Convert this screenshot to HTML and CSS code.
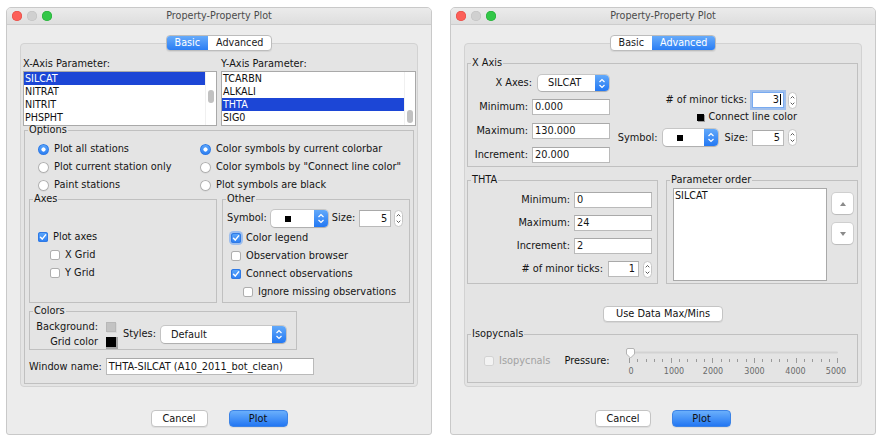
FILE: index.html
```html
<!DOCTYPE html>
<html>
<head>
<meta charset="utf-8">
<title>Property-Property Plot</title>
<link rel="stylesheet" href="styles.css">
</head>
<body>
<div class="desk">

<section class="win">
  <header class="titlebar">
    <span class="lights"><i class="light red"></i><i class="light off"></i><i class="light green"></i></span>
    <span class="title">Property-Property Plot</span>
    <span></span>
  </header>
  <div class="wbody">
    <div class="tabs"><span class="tab on">Basic</span><span class="tab">Advanced</span></div>
    <div class="panel basic">
      <div class="params">
        <div>
          <div class="plabel">X-Axis Parameter:</div>
          <div class="list">
            <div class="rows"><div class="row sel">SILCAT</div><div class="row">NITRAT</div><div class="row">NITRIT</div><div class="row">PHSPHT</div></div>
            <div class="vscroll"><span class="thumb t1"></span></div>
          </div>
        </div>
        <div>
          <div class="plabel">Y-Axis Parameter:</div>
          <div class="list">
            <div class="rows"><div class="row">TCARBN</div><div class="row">ALKALI</div><div class="row sel">THTA</div><div class="row">SIG0</div></div>
            <div class="vscroll"><span class="thumb t2"></span></div>
          </div>
        </div>
      </div>

      <fieldset class="grp opts">
        <legend>Options</legend>
        <div class="radios">
          <div class="opt"><i class="radio on"></i>Plot all stations</div>
          <div class="opt"><i class="radio on"></i>Color symbols by current colorbar</div>
          <div class="opt"><i class="radio"></i>Plot current station only</div>
          <div class="opt"><i class="radio"></i>Color symbols by "Connect line color"</div>
          <div class="opt"><i class="radio"></i>Paint stations</div>
          <div class="opt"><i class="radio"></i>Plot symbols are black</div>
        </div>
        <div class="subrow">
          <fieldset class="grp axes">
            <legend>Axes</legend>
            <div class="axes-body">
              <div class="chk"><i class="cb on"><svg viewBox="0 0 10 10" width="10" height="10"><path d="M2.5 5.3 4.2 7.1 7.6 2.9" fill="none" stroke="#fff" stroke-width="1.5" stroke-linecap="round" stroke-linejoin="round"/></svg></i>Plot axes</div>
              <div class="chk ind"><i class="cb"></i>X Grid</div>
              <div class="chk ind"><i class="cb"></i>Y Grid</div>
            </div>
          </fieldset>
          <fieldset class="grp other">
            <legend>Other</legend>
            <div class="other-body">
              <div class="symrow">
                <span>Symbol:</span>
                <span class="popup w-sym ml4"><span class="pv"><i class="sq"></i></span><span class="pa"><svg width="8" height="11" viewBox="0 0 8 11"><path d="M1.5 4 4 1.5 6.5 4M1.5 7 4 9.5 6.5 7" fill="none" stroke="#fff" stroke-width="1.2"/></svg></span></span>
                <span class="ml4">Size:</span>
                <span class="field num w-size ml4 tall">5</span>
                <svg class="spin ml3" width="9" height="17" viewBox="0 0 9 17"><rect x=".5" y=".5" width="8" height="16" rx="4" fill="#fff" stroke="#c6c6c6"/><path d="M2.7 6.3 4.5 4.5 6.3 6.3M2.7 10.7 4.5 12.5 6.3 10.7" fill="none" stroke="#4a4a4a" stroke-width=".9"/></svg>
              </div>
              <div class="chk"><i class="cb on focus"><svg viewBox="0 0 10 10" width="10" height="10"><path d="M2.5 5.3 4.2 7.1 7.6 2.9" fill="none" stroke="#fff" stroke-width="1.5" stroke-linecap="round" stroke-linejoin="round"/></svg></i>Color legend</div>
              <div class="chk"><i class="cb"></i>Observation browser</div>
              <div class="chk"><i class="cb on"><svg viewBox="0 0 10 10" width="10" height="10"><path d="M2.5 5.3 4.2 7.1 7.6 2.9" fill="none" stroke="#fff" stroke-width="1.5" stroke-linecap="round" stroke-linejoin="round"/></svg></i>Connect observations</div>
              <div class="chk ind"><i class="cb"></i>Ignore missing observations</div>
            </div>
          </fieldset>
        </div>
        <fieldset class="grp colors">
          <legend>Colors</legend>
          <div class="colors-body">
            <span class="clabel">Background:</span><i class="swatch gray"></i>
            <span class="slabel">Styles:</span>
            <span class="popup w-styles"><span class="pv">Default</span><span class="pa"><svg width="8" height="11" viewBox="0 0 8 11"><path d="M1.5 4 4 1.5 6.5 4M1.5 7 4 9.5 6.5 7" fill="none" stroke="#fff" stroke-width="1.2"/></svg></span></span>
            <span class="clabel">Grid color</span><i class="swatch black"></i>
          </div>
        </fieldset>
        <div class="wname"><span>Window name:</span><span class="field w-wname">THTA-SILCAT (A10_2011_bot_clean)</span></div>
      </fieldset>
    </div>
    <div class="actions"><button class="btn w-cancel">Cancel</button><button class="btn primary w-plot">Plot</button></div>
  </div>
</section>

<section class="win">
  <header class="titlebar">
    <span class="lights"><i class="light red"></i><i class="light off"></i><i class="light green"></i></span>
    <span class="title">Property-Property Plot</span>
    <span></span>
  </header>
  <div class="wbody">
    <div class="tabs"><span class="tab">Basic</span><span class="tab on">Advanced</span></div>
    <div class="panel adv">
      <fieldset class="grp xaxis">
        <legend>X Axis</legend>
        <div class="xbody">
          <div class="xform">
            <span class="lbl xl">X Axes:</span>
            <span class="popup w-xaxes"><span class="pv">SILCAT</span><span class="pa"><svg width="8" height="11" viewBox="0 0 8 11"><path d="M1.5 4 4 1.5 6.5 4M1.5 7 4 9.5 6.5 7" fill="none" stroke="#fff" stroke-width="1.2"/></svg></span></span>
            <span class="lbl">Minimum:</span><span class="field">0.000</span>
            <span class="lbl">Maximum:</span><span class="field">130.000</span>
            <span class="lbl">Increment:</span><span class="field">20.000</span>
          </div>
          <div class="xright">
            <div class="xr1">
              <span># of minor ticks:</span>
              <span class="field num focus w-size ml5">3<span class="caret"></span></span>
              <svg class="spin ml4" width="9" height="17" viewBox="0 0 9 17"><rect x=".5" y=".5" width="8" height="16" rx="4" fill="#fff" stroke="#c6c6c6"/><path d="M2.7 6.3 4.5 4.5 6.3 6.3M2.7 10.7 4.5 12.5 6.3 10.7" fill="none" stroke="#4a4a4a" stroke-width=".9"/></svg>
            </div>
            <div class="xr2"><i class="blk"></i>Connect line color</div>
            <div class="xr3">
              <span>Symbol:</span>
              <span class="popup w-sym2 ml5"><span class="pv"><i class="sq sq2"></i></span><span class="pa"><svg width="8" height="11" viewBox="0 0 8 11"><path d="M1.5 4 4 1.5 6.5 4M1.5 7 4 9.5 6.5 7" fill="none" stroke="#fff" stroke-width="1.2"/></svg></span></span>
              <span class="ml7">Size:</span>
              <span class="field num w-size ml4">5</span>
              <svg class="spin ml4" width="9" height="17" viewBox="0 0 9 17"><rect x=".5" y=".5" width="8" height="16" rx="4" fill="#fff" stroke="#c6c6c6"/><path d="M2.7 6.3 4.5 4.5 6.3 6.3M2.7 10.7 4.5 12.5 6.3 10.7" fill="none" stroke="#4a4a4a" stroke-width=".9"/></svg>
            </div>
          </div>
        </div>
      </fieldset>

      <div class="row2">
        <fieldset class="grp thta">
          <legend>THTA</legend>
          <div class="tform">
            <span class="lbl">Minimum:</span><span class="field">0</span>
            <span class="lbl">Maximum:</span><span class="field">24</span>
            <span class="lbl">Increment:</span><span class="field">2</span>
            <div class="tticks">
              <span class="lbl"># of minor ticks:</span>
              <span class="field num w-ticks ml5">1</span>
              <svg class="spin ml4" width="9" height="17" viewBox="0 0 9 17"><rect x=".5" y=".5" width="8" height="16" rx="4" fill="#fff" stroke="#c6c6c6"/><path d="M2.7 6.3 4.5 4.5 6.3 6.3M2.7 10.7 4.5 12.5 6.3 10.7" fill="none" stroke="#4a4a4a" stroke-width=".9"/></svg>
            </div>
          </div>
        </fieldset>
        <fieldset class="grp porder">
          <legend>Parameter order</legend>
          <div class="pobody">
            <div class="plist"><div class="prow">SILCAT</div></div>
            <div class="arrows">
              <span class="abtn up"><i class="tri tup"></i></span>
              <span class="abtn down"><i class="tri tdown"></i></span>
            </div>
          </div>
        </fieldset>
      </div>

      <button class="btn datab">Use Data Max/Mins</button>

      <fieldset class="grp iso">
        <legend>Isopycnals</legend>
        <div class="isobody">
          <div class="chk dis"><i class="cb cbdis"></i>Isopycnals</div>
          <span class="press">Pressure:</span>
          <svg class="slider" width="232" height="32" viewBox="0 0 232 32">
            <line x1="8" y1="6.5" x2="215" y2="6.5" stroke="#d2d2d2" stroke-width="2" stroke-linecap="round"/>
            <path d="M7.5 12v5M15.5 13v3M24.5 13v3M32.5 13v3M40.5 13v3M49.5 12v5M57.5 13v3M65.5 13v3M74.5 13v3M82.5 13v3M90.5 12v5M99.5 13v3M107.5 13v3M115.5 13v3M124.5 13v3M132.5 12v5M140.5 13v3M149.5 13v3M157.5 13v3M165.5 13v3M174.5 12v5M182.5 13v3M190.5 13v3M199.5 13v3M207.5 13v3M215.5 12v5" stroke="#9a9a9a" stroke-width="1" fill="none"/>
            <path d="M6 2.5H11Q12.5 2.5 12.5 4V8L8.5 12 4.5 8V4Q4.5 2.5 6 2.5Z" fill="#fff" stroke="#b3b3b3"/>
            <g font-family="DejaVu Sans, sans-serif" font-size="8" fill="#6a6a6a" text-anchor="middle">
              <text x="9" y="28">0</text>
              <text x="52" y="28">1000</text>
              <text x="91" y="28">2000</text>
              <text x="132.5" y="28">3000</text>
              <text x="173.5" y="28">4000</text>
              <text x="214" y="28">5000</text>
            </g>
          </svg>
        </div>
      </fieldset>
    </div>
    <div class="actions"><button class="btn w-cancel2">Cancel</button><button class="btn primary w-plot">Plot</button></div>
  </div>
</section>

</div>
</body>
</html>
```

FILE: styles.css
```css
* { box-sizing: border-box; }
html, body { margin: 0; padding: 0; background: #fff; }
body {
  font-family: "DejaVu Sans", "Liberation Sans", sans-serif;
  font-size: 9.8px;
  line-height: 12px;
  color: #151515;
}
i { display: block; font-style: normal; }

.desk { display: flex; gap: 18px; padding: 7px 0 0 6px; }

.win {
  width: 426px; height: 428px; flex: none;
  display: flex; flex-direction: column;
  background: #ececec;
  border: 1px solid #c9c9c9;
  border-radius: 5px 5px 3px 3px;
}
.titlebar {
  flex: none; height: 17px;
  display: grid; grid-template-columns: 1fr auto 1fr; align-items: center;
  background: linear-gradient(#ebebeb, #dedede);
  border-bottom: 1px solid #cdcdcd;
  border-radius: 4px 4px 0 0;
}
.lights { display: flex; gap: 5px; padding-left: 5px; }
.light { width: 10px; height: 10px; border-radius: 50%; }
.red { background: #fc5f58; box-shadow: inset 0 0 0 .5px #df463f; }
.off { background: #d0d0d0; box-shadow: inset 0 0 0 .5px #bfbfbf; }
.green { background: #33c748; box-shadow: inset 0 0 0 .5px #21a833; }
.title { color: #4b4b4b; line-height: 16px; font-size: 9.6px; }

.wbody { flex: 1; display: flex; flex-direction: column; align-items: center; padding: 10px 13px 0; }

.tabs {
  display: flex; height: 16px; position: relative; z-index: 1; margin-bottom: -8px;
  background: #fff; border: 1px solid #bcbcbc; border-radius: 4px; overflow: hidden;
  box-shadow: 0 1px 1px rgba(0,0,0,.07);
}
.tab { padding: 0 8px; line-height: 14px; color: #1a1a1a; font-size: 9.6px; }
.tab.on { background: linear-gradient(#67abfa, #2a7df4); color: #fff; }

.panel {
  align-self: stretch; height: 344px;
  background: #e4e4e4; border: 1px solid #d2d2d2; border-radius: 4px;
}

.actions { display: flex; gap: 21px; margin-top: 23px; }
.btn {
  font: inherit; height: 17px; line-height: 15px; padding: 0; color: #111;
  background: #fff; border: 1px solid #c4c4c4; border-radius: 4px;
  box-shadow: 0 1px 0 rgba(0,0,0,.06);
}
.w-cancel { width: 57px; }
.w-cancel2 { width: 56px; }
.w-plot { width: 59px; }
.primary { background: linear-gradient(#6aaffb, #2377f3); border-color: #3c83e6; }

/* group boxes */
.grp { margin: 0; padding: 0; border: 1px solid #c0c0c0; min-inline-size: 0; flex: none; }
.grp > legend { padding: 0 1px; margin-left: 3px; line-height: 12px; }

/* basic: parameter lists */
.params { display: grid; grid-template-columns: 194px 195px; column-gap: 4px; padding: 14px 0 0 2px; }
.plabel { line-height: 12px; margin-bottom: 1px; }
.list { height: 55px; display: flex; overflow: hidden; background: #fff; border: 1px solid #a9a9a9; }
.rows { flex: 1; }
.row { line-height: 13px; padding-left: 1px; color: #111; font-size: 9.6px; }
.row.sel { background: #1c46d6; color: #fff; }
.vscroll { width: 11px; flex: none; border-left: 1px solid #f0f0f0; }
.thumb { display: block; width: 6px; height: 13px; margin-left: 2px; border-radius: 3px; background: #c1c1c1; }
.t1 { margin-top: 18px; }
.t2 { margin-top: 38px; }

/* options */
.opts { width: 390px; height: 260px; margin: -2px 0 0 3px; }
.radios { display: grid; grid-template-columns: 162px 1fr; grid-auto-rows: 18px; padding: 4px 0 0 13px; }
.opt { display: flex; align-items: center; gap: 5px; white-space: nowrap; }
.radio {
  width: 11px; height: 11px; flex: none; border-radius: 50%;
  background: #fff; box-shadow: inset 0 0 0 1px #b0b0b0, 0 .5px 1px rgba(0,0,0,.08);
}
.radio.on {
  background: radial-gradient(circle, #fff 0 1.8px, transparent 2.4px), linear-gradient(#5fa9fb, #2a7df3);
  box-shadow: inset 0 0 0 1px #2f79e4;
}

.subrow { display: flex; gap: 5px; margin: -1px 0 0 4px; }
.axes, .other { width: 188px; height: 110px; }
.axes-body { height: 97px; display: flex; flex-direction: column; justify-content: center; padding: 3px 0 0 8px; }
.other-body { padding: 4px 0 0 4px; }
.other-body .chk { margin-left: 4px; }
.other-body .chk.ind { margin-left: 16px; }

.chk { display: flex; align-items: center; gap: 5px; height: 18px; white-space: nowrap; }
.ind { margin-left: 12px; }
.cb { width: 10px; height: 10px; flex: none; border-radius: 2.5px; background: #fff; box-shadow: inset 0 0 0 1px #aeaeae; }
.cb svg { display: block; }
.cb.on { background: linear-gradient(#5fa9fb, #2a7df3); box-shadow: inset 0 0 0 1px #2f79e4; }
.cb.focus { box-shadow: inset 0 0 0 1px #2f79e4, 0 0 0 2px rgba(98,158,245,.55); }

.symrow { display: flex; align-items: center; height: 18px; margin-bottom: 2px; white-space: nowrap; }
.ml3 { margin-left: 3px; }
.ml4 { margin-left: 4px; }
.ml5 { margin-left: 5px; }
.ml7 { margin-left: 7px; }

/* popups, fields, spinners */
.popup {
  display: flex; height: 17px; flex: none;
  background: #fff; border-radius: 4px;
  box-shadow: 0 0 0 1px rgba(0,0,0,.13), 0 1px 1px rgba(0,0,0,.12);
}
.pv { flex: 1; line-height: 17px; padding-left: 10px; white-space: nowrap; }
.pa {
  width: 14px; flex: none; display: flex; align-items: center; justify-content: center;
  border-radius: 0 4px 4px 0; background: linear-gradient(#62a9fa, #2378f3);
}
.pa svg { display: block; }
.sq { width: 6px; height: 6px; background: #000; margin: 6px 0 0 4px; }
.w-sym { width: 57px; }
.w-sym2 { width: 55px; }
.w-styles { width: 125px; }
.w-xaxes { width: 71px; height: 16px; margin-left: 6px; }
.w-xaxes .pv { line-height: 16px; }

.field {
  display: block; flex: none; height: 16px; line-height: 14px; padding: 0 2px;
  background: #fff; border: 1px solid #bababa; border-top-color: #a9a9a9; white-space: nowrap;
}
.tall { height: 17px; line-height: 15px; }
.num { text-align: right; padding-right: 3px; }
.w-size { width: 32px; }
.w-ticks { width: 31px; }
.focus { border-color: #78aaf0; box-shadow: 0 0 0 2px rgba(104,160,243,.55); padding-right: 2px; }
.caret { display: inline-block; width: 1px; height: 11px; background: #000; vertical-align: -2px; margin-left: 1px; }
.spin { display: block; flex: none; }

/* colors */
.colors { width: 268px; margin: 2px 0 0 4px; }
.colors-body { display: grid; grid-template-columns: 68px 18px 45px 125px; grid-template-rows: 15px 15px; align-items: center; padding-top: 2px; }
.clabel { text-align: right; white-space: nowrap; }
.swatch { width: 10px; height: 10px; justify-self: end; }
.swatch.gray { background: #c3c3c3; box-shadow: 1px 1px 0 #d9d9d9, inset 0 0 0 1px #b8b8b8; }
.swatch.black { background: #000; box-shadow: 1px 1px 0 1px #a3a3a3; }
.slabel { grid-row: 1 / 3; grid-column: 3; padding-left: 7px; }
.colors-body .popup { grid-row: 1 / 3; grid-column: 4; }

.wname { display: flex; align-items: center; gap: 4px; height: 17px; margin: 8px 0 0 4px; white-space: nowrap; }
.w-wname { width: 208px; height: 17px; line-height: 15px; }

/* advanced */
.adv { padding-top: 13px; }
.xaxis { width: 391px; height: 110px; margin-left: 2px; }
.xbody { display: flex; padding-top: 6px; }
.xform { display: grid; grid-template-columns: 60px 78px; grid-auto-rows: 16px; column-gap: 4px; row-gap: 8px; }
.lbl { text-align: right; line-height: 16px; white-space: nowrap; }
.xl { margin-right: -4px; }
.xright { align-self: center; width: 178px; margin-left: 9px; display: flex; flex-direction: column; align-items: flex-end; white-space: nowrap; }
.xr1 { display: flex; align-items: center; height: 16px; }
.xr2 { display: flex; align-items: center; gap: 4px; height: 14px; margin-top: 2px; }
.blk { width: 7px; height: 7px; background: #000; box-shadow: 1px 1px 0 #9a9a9a; }
.xr3 { display: flex; align-items: center; height: 17px; margin-top: 5px; }

.row2 { display: flex; gap: 8px; margin: 7px 0 0 2px; }
.thta { width: 191px; height: 110px; }
.tform { display: grid; grid-template-columns: 102px 78px; grid-auto-rows: 16px; column-gap: 4px; row-gap: 7px; padding-top: 6px; }
.tticks { grid-column: 1 / -1; display: flex; align-items: center; justify-content: flex-end; }

.porder { width: 192px; height: 110px; }
.pobody { display: flex; padding: 2px 0 0 6px; }
.plist { width: 154px; height: 93px; background: #fff; border: 1px solid #a9a9a9; }
.prow { line-height: 14px; padding-left: 1px; color: #111; font-size: 9.6px; }
.arrows { display: flex; flex-direction: column; margin-left: 5px; }
.abtn {
  width: 21px; height: 21px; display: flex; align-items: center; justify-content: center;
  background: #fff; border-radius: 4px;
  box-shadow: 0 0 0 1px rgba(0,0,0,.09), 0 1px 1px rgba(0,0,0,.1);
}
.abtn.up { margin-top: 5px; }
.abtn.down { margin-top: 9px; }
.tri { width: 0; height: 0; border-left: 3.5px solid transparent; border-right: 3.5px solid transparent; }
.tup { border-bottom: 4px solid #8a8a8a; }
.tdown { border-top: 4px solid #8a8a8a; }

.datab { display: block; width: 120px; height: 16px; line-height: 14px; margin: 22px auto 0; }

.iso { width: 391px; height: 55px; margin: 6px 0 0 2px; }
.isobody { display: flex; align-items: flex-start; padding: 13px 0 0 16px; }
.isobody .chk { height: 16px; }
.dis { color: #a2a2a2; }
.cbdis { background: #f3f3f3; box-shadow: inset 0 0 0 1px #d3d3d3; }
.press { margin-left: 14px; line-height: 16px; color: #111; }
.slider { display: block; flex: none; margin: -7px 0 0 12px; }
```
